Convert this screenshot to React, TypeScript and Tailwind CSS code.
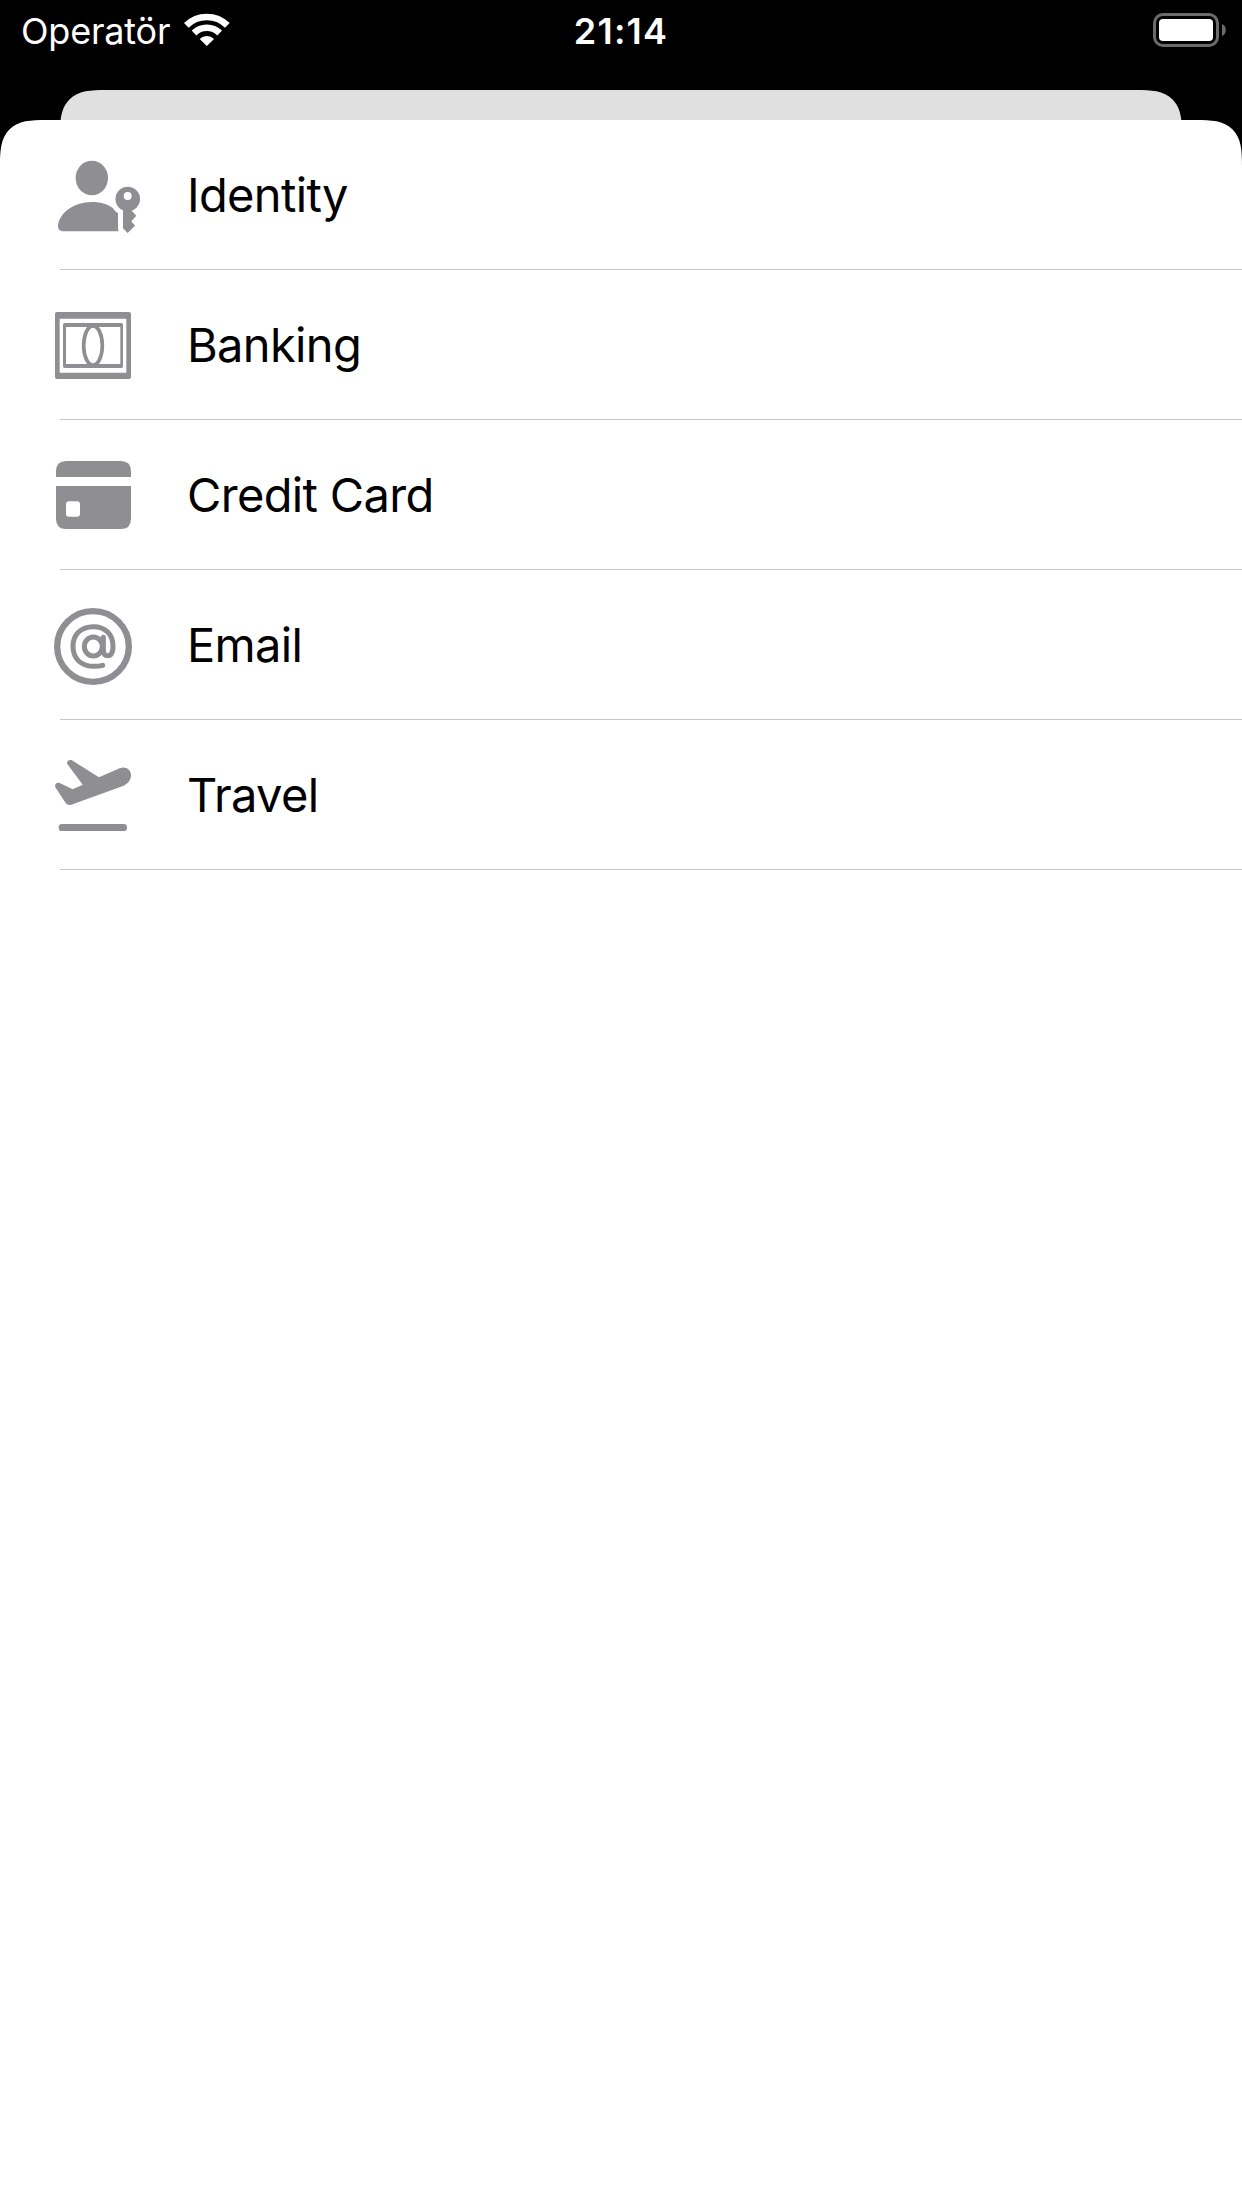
import type { ReactNode } from 'react';

interface Category {
  label: string;
  icon: ReactNode;
}

function IdentityIcon() {
  return (
    <>
      <ellipse cx="155.5" cy="99" rx="48.5" ry="52" />
      <path d="M72 259C60 259 54 254 54 243C57 205 100 171 155 171C185 171 206 179 219 190Q224 200 234 205V248Q234 255 236 259Z" />
      <path
        fillRule="evenodd"
        d="M249 196A37 37 0 1 1 275 197L289 212L274 229L285 242L263 264L249 250ZM263 141a12 12 0 1 0 0 24a12 12 0 1 0 0-24Z"
      />
    </>
  );
}

function BankingIcon() {
  return (
    <>
      <path
        fillRule="evenodd"
        d="M51 51H267Q273 51 273 57V246Q273 252 267 252H51Q45 252 45 246V57Q45 51 51 51ZM59 71V233H259V71Z"
      />
      <path
        fillRule="evenodd"
        d="M74 84H244Q249 84 249 89V214Q249 219 244 219H74Q69 219 69 214V89Q69 84 74 84ZM78 96V207H241V96Z"
      />
      <ellipse cx="159" cy="151.5" rx="28" ry="59" fill="white" stroke="currentColor" strokeWidth="11" />
    </>
  );
}

function CreditCardIcon() {
  return (
    <>
      <path d="M48 96V79Q48 48 79 48H242Q273 48 273 79V96Z" />
      <path
        fillRule="evenodd"
        d="M48 123H273V221Q273 252 242 252H79Q48 252 48 221ZM87 169Q78 169 78 178V206Q78 215 87 215H111Q120 215 120 206V178Q120 169 111 169Z"
      />
    </>
  );
}

function EmailIcon() {
  return (
    <g fill="none" stroke="currentColor" strokeLinecap="round">
      <ellipse cx="159" cy="154.5" rx="107.5" ry="106" strokeWidth="19" />
      <ellipse cx="160" cy="154.5" rx="27" ry="28.5" strokeWidth="15" />
      <path
        strokeWidth="15"
        d="M190 127V164C190 176 195 182 203 182C213 182 219 172 219 153C219 117 195 95 160 95C123 95 99 118 99 154C99 191 123 214 163 214Q178 214 188 211"
      />
    </g>
  );
}

function TravelIcon() {
  return (
    <>
      <path d="M82 57C78 50 87 43 96 46L177 97L239 70C256 62 273 73 273 91C273 105 264 116 251 122L94 179C88 181 81 179 77 174L47 128C42 119 50 111 59 114L98 133L128 119Z" />
      <rect x="56" y="237" width="205" height="21" rx="10" />
    </>
  );
}

const CATEGORIES: Category[] = [
  { label: 'Identity', icon: <IdentityIcon /> },
  { label: 'Banking', icon: <BankingIcon /> },
  { label: 'Credit Card', icon: <CreditCardIcon /> },
  { label: 'Email', icon: <EmailIcon /> },
  { label: 'Travel', icon: <TravelIcon /> },
];

function StatusBar() {
  return (
    <header className="grid h-[90px] grid-cols-3 items-start text-white">
      <div className="flex pl-[21px]">
        <span className="mt-[9px] w-[150px] text-[36px] leading-[44px] tracking-[-0.2px] whitespace-nowrap">
          Operatör
        </span>
        <svg viewBox="550 36 144 105" className="mt-3 ml-[12px] h-[35px] w-12">
          <g fill="none" stroke="white" strokeWidth="20">
            <path d="M560 76A88 88 0 0 1 683 76" />
            <path d="M583 99A55 55 0 0 1 660 99" />
          </g>
          <path fill="white" d="M621.5 138L600 117A31 31 0 0 1 643 117Z" />
        </svg>
      </div>
      <span className="mt-[9px] text-center text-[36px] leading-[44px] font-semibold tracking-[1.2px]">
        21:14
      </span>
      <svg viewBox="0 0 74 34" className="mt-[13px] mr-[15px] h-[34px] w-[74px] justify-self-end">
        <rect x="1.5" y="1.5" width="63" height="31" rx="8.5" fill="none" stroke="#6b6b6b" strokeWidth="3" />
        <rect x="6" y="6" width="54" height="22" rx="4" fill="white" />
        <path fill="#6b6b6b" d="M69 11C74 12.5 74 21.5 69 23Z" />
      </svg>
    </header>
  );
}

function CategoryRow({ label, icon }: Readonly<Category>) {
  return (
    <li>
      <div className="flex h-[149px] items-center">
        <svg
          viewBox="0 0 360 300"
          fill="currentColor"
          className="mt-px ml-10 h-[100px] w-[120px] shrink-0 text-[#8e8e93]"
        >
          {icon}
        </svg>
        <span className="ml-[27px] text-[47px] leading-[60px] tracking-[-0.65px] text-black">
          {label}
        </span>
      </div>
      <div className="ml-[60px] h-px bg-[#c6c6c8]" />
    </li>
  );
}

export default function App() {
  return (
    <div className="flex h-[2208px] w-[1242px] flex-col overflow-hidden bg-black font-['Inter',sans-serif]">
      <StatusBar />
      {/* top edge of the sheet underneath */}
      <div className="mx-[60px] h-[30px] shrink-0 overflow-hidden">
        <div className="h-[100px] rounded-t-[46px] bg-[#e0e0e0] [corner-shape:superellipse(1.6)]" />
      </div>
      <main className="flex-1 rounded-t-[46px] bg-white [corner-shape:superellipse(1.6)]">
        <ul>
          {CATEGORIES.map(category => (
            <CategoryRow key={category.label} {...category} />
          ))}
        </ul>
      </main>
    </div>
  );
}
